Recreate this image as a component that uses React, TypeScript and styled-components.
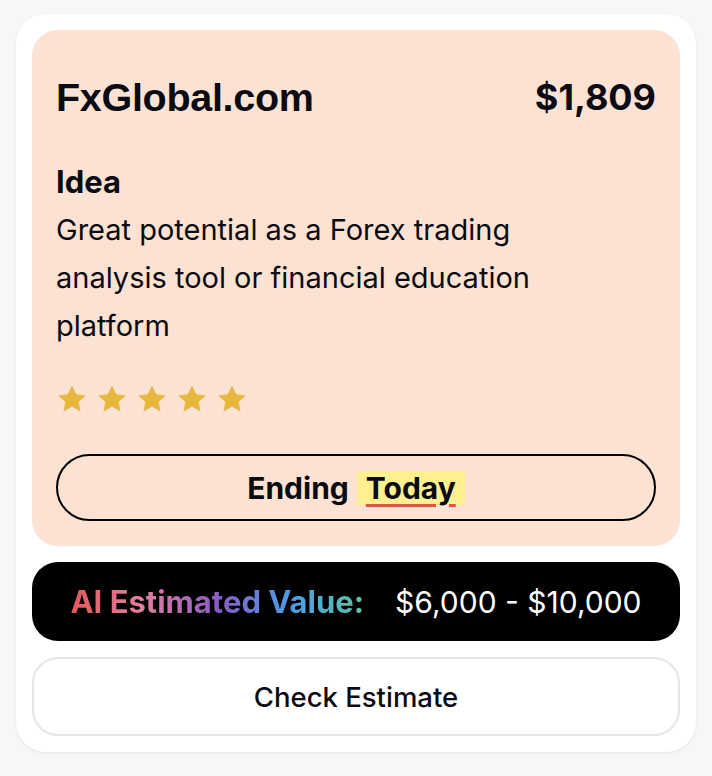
import React from 'react'
import styled, { createGlobalStyle } from 'styled-components'

const GlobalStyle = createGlobalStyle`
  * { box-sizing: border-box; }
  body {
    margin: 0;
    background: #f7f7f7;
    font-family: Inter, "Noto Sans", "Liberation Sans", sans-serif;
    color: #0b0b14;
  }
`

const Page = styled.div`
  padding: 14px 16px;
`

const Card = styled.div`
  background: #ffffff;
  border-radius: 30px;
  padding: 16px;
  display: flex;
  flex-direction: column;
  gap: 16px;
  box-shadow: 0 1px 3px rgba(0, 0, 0, 0.08);
`

const Listing = styled.div`
  background: #fbe2d2;
  border-radius: 26px;
  padding: 44px 24px 25px;
  display: flex;
  flex-direction: column;
`

const Header = styled.div`
  display: flex;
  justify-content: space-between;
  align-items: center;
  line-height: 46px;
  margin-bottom: 38px;
`

const Domain = styled.h1`
  margin: 0;
  font-family: "Liberation Sans", Arial, sans-serif;
  font-size: 39.5px;
  font-weight: 700;
  letter-spacing: -0.3px;
`

const Price = styled.div`
  font-size: 36px;
  font-weight: 700;
`

const Label = styled.div`
  font-size: 31px;
  font-weight: 700;
  line-height: 48px;
`

const Description = styled.p`
  margin: 0;
  max-width: 560px;
  font-size: 29px;
  line-height: 48px;
`

const Stars = styled.div`
  display: flex;
  gap: 8px;
  margin: 33px 0 39px;
`

const Star = styled.svg`
  width: 32px;
  height: 32px;
  fill: #e6b83e;
`

const EndingButton = styled.button`
  height: 67px;
  border: 2px solid #000;
  border-radius: 999px;
  background: transparent;
  font-family: inherit;
  font-size: 30px;
  font-weight: 700;
  color: #0b0b14;
  display: flex;
  justify-content: center;
  align-items: center;
  gap: 8px;
`

const Highlight = styled.span`
  background: #fdf08f;
  padding: 0 9px;
  line-height: 34px;
  text-decoration: underline;
  text-decoration-color: #e5534b;
  text-decoration-thickness: 3px;
  text-underline-offset: 5px;
`

const Estimate = styled.div`
  background: #000;
  border-radius: 26px;
  height: 79px;
  display: flex;
  justify-content: center;
  align-items: center;
  gap: 31px;
  font-size: 30px;
`

const GradientText = styled.span`
  font-weight: 700;
  font-size: 31px;
  background: linear-gradient(90deg, #e4575a 0%, #e27fa0 25%, #8a5cc4 50%, #4a9be8 75%, #5ec4a8 100%);
  -webkit-background-clip: text;
  background-clip: text;
  color: transparent;
`

const Range = styled.span`
  color: #fff;
`

const CheckButton = styled.button`
  height: 79px;
  background: #fff;
  border: 2px solid #e5e5ea;
  border-radius: 26px;
  font-family: inherit;
  font-size: 27.5px;
  font-weight: 500;
  color: #0b0b14;
`

const StarIcon = () => (
  <Star viewBox="0 0 24 24">
    <path d="M12 1.8l3.1 6.6 7.2.9-5.3 5 1.4 7.1L12 17.9l-6.4 3.5 1.4-7.1-5.3-5 7.2-.9z" strokeLinejoin="round" />
  </Star>
)

export default function App() {
  return (
    <Page>
      <GlobalStyle />
      <Card>
        <Listing>
          <Header>
            <Domain>FxGlobal.com</Domain>
            <Price>$1,809</Price>
          </Header>
          <Label>Idea</Label>
          <Description>
            Great potential as a Forex trading analysis tool or financial education platform
          </Description>
          <Stars>
            {[0, 1, 2, 3, 4].map((i) => (
              <StarIcon key={i} />
            ))}
          </Stars>
          <EndingButton>
            Ending <Highlight>Today</Highlight>
          </EndingButton>
        </Listing>
        <Estimate>
          <GradientText>AI Estimated Value:</GradientText>
          <Range>$6,000 - $10,000</Range>
        </Estimate>
        <CheckButton>Check Estimate</CheckButton>
      </Card>
    </Page>
  )
}
